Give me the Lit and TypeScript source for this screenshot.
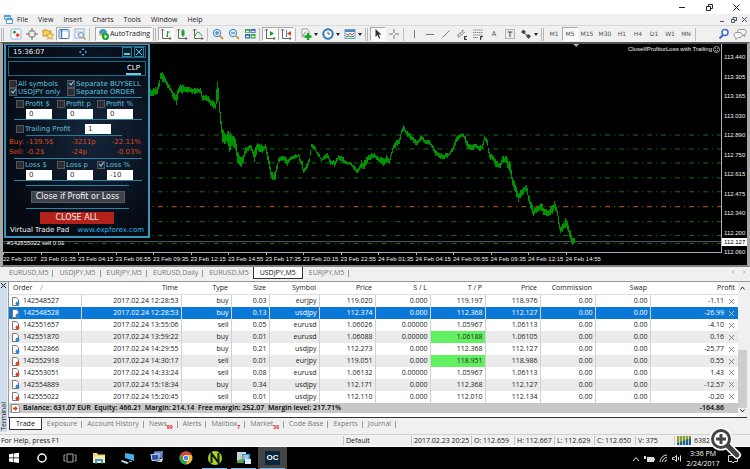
import { LitElement, html, css, svg, nothing } from "lit";
import { customElement } from "lit/decorators.js";
import { classMap } from "lit/directives/class-map.js";

type Trade = { id: string; time: string; type: string; size: string; symbol: string; open: string; sl: string; tp: string; price: string; profit: string; hit?: boolean };

const trade = (id: string, time: string, type: string, size: string, symbol: string, open: string, sl: string, tp: string, price: string, profit: string, hit = false): Trade =>
  ({ id, time: `2017.02.24 ${time}`, type, size, symbol, open, sl, tp, price, profit, hit });

const TRADES: Trade[] = [
  trade("142548527", "12:28:53", "buy", "0.03", "eurjpy", "119.020", "0.000", "119.197", "118.976", "-1.11"),
  trade("142548528", "12:28:53", "buy", "0.13", "usdjpy", "112.374", "0.000", "112.368", "112.127", "-26.99"),
  trade("142551657", "13:55:06", "sell", "0.05", "eurusd", "1.06026", "0.00000", "1.05967", "1.06113", "-4.10"),
  trade("142551870", "13:59:22", "buy", "0.01", "eurusd", "1.06088", "0.00000", "1.06188", "1.06105", "0.16", true),
  trade("142552866", "14:29:55", "buy", "0.21", "usdjpy", "112.273", "0.000", "112.368", "112.127", "-25.77"),
  trade("142552918", "14:30:17", "sell", "0.01", "eurjpy", "119.051", "0.000", "118.951", "118.986", "0.55", true),
  trade("142553051", "14:33:24", "sell", "0.08", "eurusd", "1.06132", "0.00000", "1.05967", "1.06113", "1.43"),
  trade("142554889", "15:18:34", "buy", "0.34", "usdjpy", "112.171", "0.000", "112.368", "112.127", "-12.57"),
  trade("142555022", "15:20:45", "sell", "0.01", "usdjpy", "112.110", "0.000", "112.010", "112.134", "-0.20"),
];
const COLUMNS = [72, 100, 50, 38, 50, 56, 55, 55, 55, 55, 55, 76, 12];
const HEADS = ["Time", "Type", "Size", "Symbol", "Price", "S / L", "T / P", "Price", "Commission", "Swap"];
const TIMES = ["22 Feb 2017", "23 Feb 01:35", "23 Feb 04:15", "23 Feb 06:55", "23 Feb 09:35", "23 Feb 12:15", "23 Feb 14:55", "23 Feb 17:35", "23 Feb 20:15", "23 Feb 22:55", "24 Feb 01:35", "24 Feb 04:15", "24 Feb 06:55", "24 Feb 09:35", "24 Feb 12:15", "24 Feb 14:55"];
const PRICES = ["113.440", "113.305", "113.165", "113.030", "112.890", "112.750", "112.615", "112.475", "112.340", "112.200", "112.060"];
const LEVELS = [135, 149, 163, 178, 192, 222, 236, 244];

/* Price curve: x, middle of the bar, half of its range */
const CURVE: number[][] = [
  [150, 93, 4], [154, 92, 4], [157, 90, 4], [159, 84, 5], [160, 75, 4], [162, 77, 5], [164, 78, 4], [166, 84, 3], [170, 89, 3], [173, 95, 4],
  [176, 100, 6], [178, 90, 5], [185, 89, 4], [190, 91, 3], [200, 91, 3], [202, 99, 4], [205, 97, 3], [212, 104, 4], [215, 106, 4], [216, 95, 14],
  [218, 94, 11], [219, 108, 8], [221, 127, 8], [222, 136, 7], [225, 140, 7], [227, 138, 7], [229, 142, 11], [232, 141, 7], [235, 144, 7], [237, 158, 7],
  [240, 162, 5], [242, 162, 6], [245, 151, 4], [250, 147, 3], [254, 157, 6], [257, 147, 5], [262, 149, 4], [265, 147, 3], [268, 161, 5], [271, 176, 6],
  [273, 178, 4], [275, 175, 5], [278, 161, 3], [283, 158, 3], [287, 163, 4], [290, 159, 3], [298, 156, 2], [302, 166, 4], [303, 172, 3], [307, 166, 3],
  [309, 160, 4], [311, 146, 3], [314, 148, 2], [317, 154, 2], [321, 160, 2], [327, 156, 3], [330, 163, 2], [334, 164, 3], [338, 158, 3], [341, 158, 3],
  [345, 163, 2], [350, 164, 2], [354, 169, 3], [357, 172, 3], [361, 165, 4], [365, 166, 5], [369, 158, 4], [375, 156, 2], [379, 160, 3], [384, 163, 4],
  [387, 160, 4], [390, 162, 3], [393, 150, 3], [397, 143, 4], [400, 142, 4], [402, 133, 3], [404, 128, 3], [407, 134, 3], [412, 138, 3], [417, 144, 3],
  [419, 142, 2], [422, 137, 3], [425, 142, 2], [430, 142, 3], [434, 149, 3], [436, 153, 3], [440, 156, 3], [444, 157, 3], [447, 156, 3], [450, 155, 2],
  [453, 150, 3], [457, 140, 3], [460, 137, 2], [463, 135, 2], [467, 142, 4], [469, 147, 4], [473, 148, 4], [476, 146, 2], [480, 149, 3], [483, 147, 4],
  [485, 138, 3], [488, 144, 4], [490, 156, 4], [493, 158, 3], [497, 165, 4], [501, 166, 3], [503, 160, 4], [507, 161, 4], [511, 170, 6], [513, 180, 6],
  [517, 193, 5], [519, 199, 4], [522, 193, 4], [525, 190, 3], [527, 188, 4], [529, 198, 5], [532, 208, 5], [534, 213, 4], [537, 211, 4], [541, 208, 5],
  [545, 212, 4], [549, 215, 4], [553, 210, 5], [555, 206, 5], [557, 210, 3], [559, 220, 6], [561, 231, 4], [564, 228, 4], [566, 224, 5], [568, 225, 5],
  [571, 237, 5], [573, 243, 5], [576, 241, 3],
];
function bars(): string {
  let d = "";
  for (let x = 150; x < 576; x++) {
    let i = 0;
    while (CURVE[i + 1][0] <= x) i++;
    const [a, b] = [CURVE[i], CURVE[i + 1]];
    const t = (x - a[0]) / (b[0] - a[0]);
    const mid = a[1] + (b[1] - a[1]) * t;
    const half = a[2] + (b[2] - a[2]) * t;
    const n = Math.abs(Math.sin(x * 12.9898) * 43758.5453) % 1;
    const m = Math.abs(Math.sin(x * 78.233) * 12543.123) % 1;
    d += `M${x + 0.5} ${(mid - half * (0.4 + 0.7 * n)).toFixed(1)}V${(mid + half * (0.4 + 0.7 * m)).toFixed(1)}`;
  }
  return d;
}

const icon = (body: unknown, w = 12) => html`<svg class="ico" width=${w} height="12" viewBox="0 0 ${w} 12" fill="none" aria-hidden="true">${body}</svg>`;
const axes = svg`<path d="M2.5 1v9.5H11M1 2.5 2.500 1 4 2.500M9.500 9 11 10.500 9.500 12" stroke="#666"/>`;
const I = {
  newChart: icon(svg`<rect x="1" y="1" width="10" height="10" rx="1" fill="#fff" stroke="#8db9dd"/><path d="m2.500 4 2-1.500 2 1.500-2 2z" fill="#1fa53a"/><path d="m5.500 7 2-2 2.500 2-2.500 2.500z" fill="#e8442e"/>`),
  target: icon(svg`<circle cx="6" cy="6" r="3.5" stroke="#777"/><path d="M6 0v4M6 8v4M0 6h4M8 6h4" stroke="#777"/>`),
  favorites: icon(svg`<path d="M1 2h4l1 1h3v5H1z" fill="#f5cf58" stroke="#c89a22"/><path d="m8 4 1.200 2.500 2.600.3-2 1.800.6 2.700L8 10l-2.300 1.300.5-2.700-2-1.800 2.600-.3z" fill="#ffe07a" stroke="#bf9020" stroke-width=".7"/>`),
  panel: icon(svg`<rect x="1" y="1.500" width="10" height="9" rx="1" fill="#fff" stroke="#3d78bd"/><path d="M2 3h8" stroke="#9cc3ea"/><path d="M3.500 2v8" stroke="#3d78bd" stroke-width="1.500"/>`),
  tester: icon(svg`<rect x="1" y="1" width="9" height="9" fill="#f4f7fa" stroke="#9db2c6"/><path d="M2 4h7M4 2v7" stroke="#b9cadb"/><circle cx="7" cy="7" r="2.500" fill="#d9ecfa" stroke="#7398ba"/><path d="m9 9 2.500 2.500" stroke="#c69a35" stroke-width="1.500"/>`),
  auto: icon(svg`<path d="M1 6.500 6 9l5-3-5-2z" fill="#e6b93f"/><path d="M2 5c0-3 2-4 4-4s4 1 4 4L6 7z" fill="#4397c8"/><circle cx="8.500" cy="8.500" r="3.500" fill="#18a32c"/><path d="m7.500 6.500 3 2-3 2z" fill="#fff"/>`),
  bar: icon(svg`${axes}<path d="M7.500 3v6M6 8h1.500M7.500 4H10" stroke="#16a02c"/>`),
  candle: icon(svg`${axes}<path d="M7 1v8" stroke="#16a02c"/><rect x="5.500" y="2.500" width="3" height="5" fill="#16a02c"/>`),
  line: icon(svg`${axes}<path d="M3 8c2-5 4-5 7 0" stroke="#16a02c"/>`),
  zoomIn: icon(svg`<circle cx="5" cy="5" r="3.700" fill="#d7ecfb" stroke="#3b86c6"/><path d="M3 5h4M5 3v4" stroke="#2473b8"/><path d="m8 8 3 3" stroke="#d3a034" stroke-width="2"/>`),
  zoomOut: icon(svg`<circle cx="5" cy="5" r="3.700" fill="#d7ecfb" stroke="#3b86c6"/><path d="M3 5h4" stroke="#2473b8"/><path d="m8 8 3 3" stroke="#d3a034" stroke-width="2"/>`),
  tile: icon(svg`<path d="M1 1h5v4H1zM6.500 6h5v4.500h-5z" fill="#2faa3c"/><path d="M6.500 1h5v4h-5zM1 6h5v4.500H1z" fill="#2c66bd"/><path d="M2 2.800h3v1.500H2zM7.500 2.800h3v1.500h-3zM2 7.800h3v1.500H2zM7.500 7.800h3v1.500h-3z" fill="#fff"/>`),
  scroll: icon(svg`${axes}<path d="m6 3 4 2.500L6 8z" fill="#16a02c"/>`),
  shift: icon(svg`${axes}<path d="M6.500 2v7" stroke="#4b7fae"/><path d="m11 3-4 2.500L11 8z" fill="#de4326"/>`),
  indicator: icon(svg`<path d="M2 1h5l2 2v6H2z" fill="#fff" stroke="#999"/><path d="M3.500 8c1-4 1.500-4 3-4" stroke="#777"/><path d="M8 5v7M4.500 8.500h7" stroke="#12a626" stroke-width="2.500"/>`),
  clock: icon(svg`<circle cx="6" cy="6" r="4.700" fill="#fff" stroke="#2a76c2" stroke-width="2"/><path d="M6 3.500V6h2" stroke="#555"/>`),
  template: icon(svg`<rect x="1" y="1.500" width="10" height="9" fill="#eaf4fd" stroke="#6f9dc9"/><path d="M1 3h10" stroke="#4d8aca" stroke-width="2"/><path d="m2 6 2 1 2-1.500L8 7l2-2" stroke="#d4472f"/><path d="m2 9 3-1 2 1 3-1" stroke="#2ba03b"/>`),
  cursor: icon(svg`<path d="M3.500 1v8l2-2 1.500 3.500 1.200-.6L6.800 6.500h2.700z" fill="#333"/>`),
  cross: icon(svg`<path d="M6 1v4M6 7v4M1 6h4M7 6h4" stroke="#777"/>`),
  vline: icon(svg`<path d="M6.500 2v8" stroke="#777"/>`),
  hline: icon(svg`<path d="M2 6.500h8" stroke="#777"/>`),
  trend: icon(svg`<path d="m2.500 9.500 7-7" stroke="#777"/>`),
  channel: icon(svg`<path d="m1 8 7-6M2 10l7-6M2 6l1 3M4 4l1 3M6 2l1 3" stroke="#888" stroke-width=".8"/><path d="M8.500 8v4M8 8.500h3M8 10h2M8 11.500h3" stroke="#444"/>`),
  fibo: icon(svg`<path d="M1 2h10M1 4.500h10M1 7h10M1 9.500h5" stroke="#888" stroke-dasharray="1.500 .5"/><path d="M8 8.500h3M8.500 8v4M8 10h2" stroke="#444"/>`),
  arrows: icon(svg`<path d="m1 4 2.500-2.500L6 4 3.500 6zM6 8l2-2 3 2-2.500 3z" fill="#444"/><path d="m4 5 4 3" stroke="#555"/>`),
  search: icon(svg`<circle cx="7" cy="4.500" r="3" fill="#fff" stroke="#3b6ed0" stroke-width="1.500"/><path d="M5 7 1.500 10.500" stroke="#3b6ed0" stroke-width="2"/>`),
  chat: html`<svg class="ico" width="14" height="12" viewBox="0 0 14 12" fill="#f6f6f6" stroke="#999" aria-hidden="true"><path d="M6 1.500h5c3 0 3 5 0 5l1 2-3-2H6c-2 0-2-5 0-5z"/><path d="M3 4.500h4c3 0 3 5 0 5H5l-2 2v-2c-2.500 0-2.500-5 0-5z"/></svg>`,
};

const task = (body: unknown) => html`<svg width="16" height="16" viewBox="0 0 16 16" fill="none" aria-hidden="true">${body}</svg>`;
const TASKS: { name: string; art: unknown; state?: string }[] = [
  { name: "Start", art: task(svg`<path d="M3 4.200 7.300 3.600v4H3zM7.900 3.500 13 2.800v4.800H7.900zM3 8.200h4.300v4L3 11.600zM7.900 8.200H13V13l-5.100-.7z" fill="#fff"/>`) },
  { name: "Cortana", art: task(svg`<circle cx="8" cy="8" r="4" stroke="#fff" stroke-width="1.500"/>`) },
  { name: "Task View", art: task(svg`<path d="M5 4h6v8H5zM3.500 5H2v6h1.500M12.500 5H14v6h-1.500" stroke="#aaa"/>`) },
  { name: "File Explorer", art: task(svg`<path d="M2 3h4l1 1.500h7V13H2z" fill="#f7d774"/><path d="M2 6h12v7H2z" fill="#fce9a4"/><path d="M4 9h8v4.500h-2V11H6v2.500H4z" fill="#3c9be0"/>`) },
  { name: "Computer", art: task(svg`<path d="m5 3 9 1.500V11L5 8z" fill="#45aee8"/><path d="m2 10 7 2.500L7 14l-6-2.500z" fill="#c7d8e3"/><path d="m9 11 3 .8" stroke="#8ba"/>`) },
  { name: "Remote Desktop", art: task(svg`<path d="m5 1.500 9-.5-.5 7L5 7z" fill="#6b87cb"/><path d="m2 4.500 8-.5v6l-7 .5z" fill="#2b53b4" stroke="#dbe4f0"/><path d="M6 12h7l1-4-3 1-1 2z" fill="#cbd2dc"/>`) },
  { name: "Chrome", art: task(svg`<circle cx="8" cy="8" r="6.500" fill="#e8b92c"/><path d="M2.300 5A6.500 6.500 0 0 1 13.700 5H8L5 9z" fill="#db4538"/><path d="M2.300 5A6.500 6.500 0 0 0 7.500 14.500L10 10 5 9z" fill="#26a154"/><circle cx="8" cy="8" r="3" fill="#fff"/><circle cx="8" cy="8" r="2.300" fill="#4786ea"/>`) },
  { name: "Navigator", state: "open", art: task(svg`<circle cx="8" cy="8" r="7" fill="#a6d71e"/><path d="M4.500 13V3.500l7 9V3" stroke="#101010" stroke-width="2"/>`) },
  { name: "Trade Terminal", state: "open", art: task(svg`<path d="M1 2h9v9H1z" fill="#b6d8ef"/><path d="M6 4h8v7H6z" fill="#3f8ed0"/><path d="M7.500 6h5M7.500 8h5" stroke="#fff"/><circle cx="4.500" cy="7" r="2" fill="#efc28b"/><path d="M1 13c0-5 7-5 7 0z" fill="#55a83e"/><path d="M9 9h6v5H9z" fill="#d7ebf7"/>`) },
  { name: "Recorder", state: "open active", art: html`<span class="oc">OC</span>` },
];

const check = (label: string, on = false) => html`<label class="check"><input type="checkbox" .checked=${on} />${label}</label>`;

@customElement("trade-pad")
export class TradePad extends LitElement {
  static styles = css`
    :host { display: block; box-sizing: border-box; border: 2px solid #3597bd; border-top-width: 1px; background: radial-gradient(ellipse at 60% 45%, #16263c, #050a13 75%); color: #5fc0da; font: 7px/8px "DejaVu Sans", sans-serif; padding: 1px 2px 2px; }
    button, input { font: inherit; margin: 0; padding: 0; border: 0; border-radius: 0; }
    header { display: flex; align-items: center; justify-content: space-between; height: 12px; border: 1px solid #1f6d8d; color: #f2f2f2; padding: 0 1px 0 4px; box-sizing: border-box; }
    header .win { display: flex; gap: 2px; }
    header button { width: 10px; height: 10px; background: #0b1d2b; border: 1px solid #27809f; color: #6cc4dc; display: grid; place-items: center; }
    .tabs { display: flex; justify-content: flex-end; height: 15px; margin-top: 3px; border: 1px solid #1f6d8d; box-sizing: border-box; padding: 0 4px; background: #060b13; }
    .tabs button { background: none; color: #fff; border-bottom: 2px solid #79c6e6; padding: 0 1px; }
    .check { display: flex; align-items: center; gap: 1px; white-space: nowrap; }
    .check input { appearance: none; width: 8px; height: 8px; background: #2d2d31; border: 1px solid #55565b; box-sizing: border-box; flex: none; position: relative; }
    .check input:checked { background: #23313d; }
    .check input:checked::after { content: ""; position: absolute; left: 2px; top: -1px; width: 2px; height: 4px; border: solid #87d7f7; border-width: 0 1px 1px 0; transform: rotate(40deg); }
    .two { display: grid; grid-template-columns: 58px 1fr; padding: 4px 0 0 1px; }
    .group { margin: 1px 4px 0 6px; border: 1px solid #2b86a6; border-width: 1px 0; padding: 2px 2px 0; display: grid; grid-template-columns: 41px 40px 1fr; row-gap: 1px; }
    .field { width: 26px; height: 10px; box-sizing: border-box; background: #fff; color: #333; padding-left: 3px; margin-left: 10px; }
    .trail { display: flex; align-items: center; justify-content: space-between; padding: 4px 35px 0 8px; }
    .trail .field { margin: 0; }
    .rule { border-top: 1px solid #2b7896; margin: 1px 24px 1px 18px; }
    .sums { display: grid; grid-template-columns: 62px 36px 1fr; padding-left: 1px; color: #dc4a1c; line-height: 10px; }
    .sums span:nth-child(3n) { text-align: right; padding-right: 5px; }
    .close { margin: 4px 17px 0 18px; border: 1px solid #2b86a6; border-width: 1px 0; height: 24px; box-sizing: border-box; display: grid; place-items: center; }
    .close button { width: 94px; height: 12px; background: #3e434b; border: 1px solid #555b64; color: #f4f4f4; font-size: 8px; line-height: 8px; white-space: nowrap; }
    .all { display: block; width: 74px; height: 12px; margin: 3px auto 0 32px; background: #b3221a; color: #f5efef; font-size: 8px; line-height: 8px; }
    footer { display: flex; justify-content: space-between; padding: 2px 2px 0; color: #f2f2f2; white-space: nowrap; }
    a { color: #39b5ea; text-decoration: none; }
  `;
  private group(kind: string, marks: boolean[], values: string[]) {
    const units = ["$", "p", "%"];
    return html`<div class="group">
      ${units.map((u, i) => check(`${kind} ${u}`, marks[i]))}
      ${units.map((u, i) => html`<input class="field" type="text" aria-label="${kind} ${u} value" .value=${values[i]} />`)}
    </div>`;
  }
  render() {
    return html`
      <header><span>15:36:07</span>
        <svg width="8" height="8" viewBox="0 0 8 8" fill="none" stroke="#4db8dc" aria-hidden="true"><path d="m3 2 1-1.500L5 2M3 6l1 1.500L5 6M2 3 .5 4 2 5M6 3l1.500 1L6 5"/></svg>
        <span class="win"><button aria-label="Minimize"><svg width="6" height="6"><path d="M0 5h6" stroke="currentColor" stroke-width="2"/></svg></button>
        <button aria-label="Close"><svg width="6" height="6"><path d="m0 0 6 6M6 0 0 6" stroke="currentColor"/></svg></button></span>
      </header>
      <div class="tabs"><button>CLP</button></div>
      <div class="two">${check("All symbols")}${check("Separate BUYSELL", true)}${check("USDJPY only", true)}${check("Separate ORDER")}</div>
      ${this.group("Profit", [false, false, false], ["0", "0", "0"])}
      <div class="trail">${check("Trailing Profit")}<input class="field" type="text" aria-label="Trailing Profit value" .value=${"1"} /></div>
      <div class="rule"></div>
      <div class="sums"><span>Buy: -139.5$</span><span>-3211p</span><span>-22.11%</span><span>Sell: -0.2$</span><span>-24p</span><span>-0.03%</span></div>
      ${this.group("Loss", [false, false, true], ["0", "0", "-10"])}
      <div class="close"><button>Close if Profit or Loss</button></div>
      <button class="all">CLOSE ALL</button>
      <footer><span>Virtual Trade Pad</span><a href="#expforex">www.expforex.com</a></footer>`;
  }
}

@customElement("price-chart")
export class PriceChart extends LitElement {
  static styles = css`
    :host { display: grid; grid-template: minmax(0, 1fr) 12px / minmax(0, 1fr) 25px; position: relative; background: #000; color: #f0f0f0; font: 6px/8px "Liberation Sans", sans-serif; border: solid #a8a8a8; border-width: 2px 3px 2px 3px; border-top-color: #555; border-bottom-color: #808080; box-sizing: border-box; overflow: hidden; }
    .plot { position: relative; border: solid #b0b0b0; border-width: 0 1px 1px 0; min-height: 0; }
    .plot svg { position: absolute; inset: 0; width: 100%; height: 100%; display: block; }
    .prices { display: flex; flex-direction: column; justify-content: space-between; padding: 9px 0 0 2px; margin-bottom: -3px; position: relative; }
    .now { position: absolute; left: 0; right: 0; top: 194px; background: #fff; color: #000; padding-left: 2px; }
    .times { grid-column: 1 / 3; display: grid; grid-template-columns: repeat(20, 5vw); white-space: nowrap; }
    .times span { padding-top: 2px; background: linear-gradient(#b0b0b0, #b0b0b0) 0 0 / 1px 2px no-repeat; }
    .name { position: absolute; right: 27px; top: 0; display: flex; align-items: center; gap: 1px; line-height: 10px; }
    .order { position: absolute; left: 4px; bottom: 18px; }
    trade-pad { position: absolute; left: 1px; top: 0; width: 146px; height: 194px; }
  `;
  render() {
    return html`
      <div class="plot"><svg viewBox="3 44 719 209" preserveAspectRatio="none" fill="none" aria-label="USDJPY price">
        <path d=${LEVELS.map((y) => `M4 ${y + 0.5}H722`).join("")} stroke="#167016" stroke-dasharray="5 4 1 4"/>
        <path d="M4 207.500H722" stroke="#c05c1c" stroke-dasharray="5 4 1 4"/>
        <path d="M3 242.500H722" stroke="#565a72"/>
        <path d=${bars()} stroke="#009400" shape-rendering="crispEdges"/>
        <path d="M574 44h6l-3 3z" fill="#9fb2c6"/>
      </svg></div>
      <div class="prices">${PRICES.map((p) => html`<span>${p}</span>`)}<span class="now">112.127</span></div>
      <div class="times">${TIMES.map((t) => html`<span>${t}</span>`)}</div>
      <div class="name">CloseIfProfitorLoss with Trailing <svg width="7" height="7" viewBox="0 0 7 7" fill="none" stroke="#ddd" stroke-width=".7" aria-hidden="true"><circle cx="3.500" cy="3.500" r="3"/><path d="M2.300 2v1M4.700 2v1M2 4.300q1.500 1.500 3 0"/></svg></div>
      <div class="order">#142555022 sell 0.01</div>
      <trade-pad></trade-pad>`;
  }
}

@customElement("trade-table")
export class TradeTable extends LitElement {
  static styles = css`
    :host { display: block; background: #fff; color: #222; font: 7px/10px "Open Sans", sans-serif; }
    table { width: 100%; height: 131px; table-layout: fixed; border-collapse: collapse; }
    th, td { padding: 0 2px 0 0; text-align: right; white-space: nowrap; overflow: hidden; }
    th { font-weight: 400; line-height: 12px; padding-right: 3px; border-bottom: 1px solid #ddd; height: 12px; }
    td { border-right: 1px solid #d2d2d2; }
    td:first-child, th:first-child { text-align: left; }
    th:first-child { padding-left: 4px; }
    th i { color: #888; padding-left: 6px; }
    td:nth-last-child(-n + 2) { border-right: 0; }
    td:last-child { padding: 0; }
    .alt td { background: #ebebeb; }
    .sel td { background: #0a78d7; color: #fff; }
    .alt td.hit { background: #62f062; }
    .id { display: flex; align-items: center; gap: 3px; padding-left: 2px; }
    .x { border: 0; padding: 0; margin: 0; background: none; display: grid; place-items: center; width: 10px; height: 9px; color: #888; }
    .sel .x { color: #c9c0a0; }
    tfoot td { background: #c8c8c8; border: 0; font-weight: 600; color: #000; }
    tfoot .id { white-space: pre; }
  `;
  render() {
    return html`<table>
      <colgroup>${COLUMNS.map((w) => html`<col width=${w} />`)}</colgroup>
      <thead><tr><th>Order <i>/</i></th>${HEADS.map((h) => html`<th>${h}</th>`)}<th colspan="2">Profit</th></tr></thead>
      <tbody>${TRADES.map((t, i) => html`<tr class=${classMap({ sel: i === 1, alt: i % 2 === 1 && i !== 1 })}>
        <td><span class="id"><svg width="9" height="9" viewBox="0 0 9 9" fill="none" aria-hidden="true"><path d="M1.500.5h4l2 2v6h-6z" fill="#fff" stroke="#777"/><circle cx="6.500" cy="6.500" r="2" fill=${t.type === "buy" ? "#2b8ad0" : "#dc4826"}/></svg>${t.id}</span></td>
        <td>${t.time}</td><td>${t.type}</td><td>${t.size}</td><td>${t.symbol}</td><td>${t.open}</td><td>${t.sl}</td>
        <td class=${t.hit ? "hit" : ""}>${t.tp}</td><td>${t.price}</td><td>0.00</td><td>0.00</td><td>${t.profit}</td>
        <td><button class="x" aria-label="Close order ${t.id}"><svg width="5" height="5"><path d="m0 0 5 5M5 0 0 5" stroke="currentColor"/></svg></button></td>
      </tr>`)}</tbody>
      <tfoot><tr><td colspan="11"><span class="id"><svg width="9" height="9" viewBox="0 0 9 9" aria-hidden="true"><path d="M.5.5h6l2 2v6h-8z" fill="#fff" stroke="#888"/><path d="M2 3.500h2V2l3 2.500L4 7V5.500H2z" fill="#d8431e"/></svg>Balance: 631.07 EUR  Equity: 466.21  Margin: 214.14  Free margin: 252.07  Margin level: 217.71%</span></td><td>-164.86</td><td></td></tr></tfoot>
    </table>`;
  }
}

@customElement("app-root")
export class AppRoot extends LitElement {
  static styles = css`
    :host { display: flex; flex-direction: column; min-height: 100vh; position: relative; overflow: hidden; background: #f0f0f0; color: #222; font: 7px/10px "Open Sans", "Noto Sans", sans-serif; }
    button { font: inherit; color: inherit; margin: 0; padding: 0; border: 0; background: none; border-radius: 0; }
    svg { display: block; flex: none; }
    .title { display: flex; justify-content: flex-end; align-items: center; height: 14px; background: #fff; }
    .title button { width: 27px; height: 12px; display: grid; place-items: center; }
    .menu { display: flex; align-items: center; height: 11px; padding-left: 4px; gap: 10px; }
    .menu svg { margin-right: -6px; }
    .menu .mdi { margin-left: auto; display: flex; color: #456; }
    .mdi button { width: 11px; height: 10px; display: grid; place-items: center; }
    .mdi svg { margin: 0; }
    .bar { display: flex; align-items: center; height: 17px; box-sizing: border-box; border-top: 1px solid #d9d9d9; padding-right: 2px; }
    .bar button { width: 16px; height: 14px; display: flex; align-items: center; justify-content: center; box-sizing: border-box; flex: none; color: #555; }
    .bar .on { border: 1px solid #b4b4b4; border-color: #a8a8a8 #fff #fff #a8a8a8; background: #f9f9f9; }
    .bar .dd { width: 22px; }
    .dd::after { content: ""; border: 2px solid transparent; border-top: 3px solid #222; border-bottom: 0; margin-left: 2px; }
    .bar .auto { width: 57px; gap: 1px; color: #222; white-space: nowrap; }
    .sep { width: 4px; height: 13px; flex: none; background: linear-gradient(#bdbdbd, #bdbdbd) 1px 0 / 1px 100% no-repeat; }
    .grip { width: 6px; height: 13px; flex: none; background: linear-gradient(90deg, transparent 1px, #b5b5b5 1px 2px, transparent 2px 3px, #b5b5b5 3px 4px, transparent 4px); }
    .frames { display: flex; font: 6px/10px "DejaVu Sans", sans-serif; }
    .frames .wide { width: 18px; }
    .bar .push { margin-left: auto; }
    .bar .first { margin-left: 2px; }
    .gap { width: 3px; flex: none; }
    price-chart { flex: 1 0 225px; }
    .tabs { display: flex; height: 14px; align-items: flex-start; color: #777; white-space: nowrap; }
    .tabs > button { padding: 0 5px; height: 12px; display: flex; align-items: center; background: linear-gradient(#999, #999) 100% 3px / 1px 7px no-repeat; }
    .tabs.top > button { padding-left: 6px; }
    .tabs > .cur { color: #111; background: #fff; border: 1px solid #333; border-top: 0; padding: 0 6px; margin-left: -1px; }
    .tabs small { color: #e02020; font: bold 5px/6px "Open Sans", sans-serif; align-self: flex-end; }
    .top { padding-left: 3px; }
    .top .arrows { margin-left: auto; display: flex; gap: 5px; padding-right: 3px; }
    .arrows button { width: 6px; height: 10px; }
    .term { display: grid; grid-template-columns: 8px minmax(0, 1fr) 9px 3px; grid-template-rows: auto 14px; border-top: 1px solid #999; padding-bottom: 2px; }
    .side { grid-row: 1 / 3; background: #cfdded; display: flex; flex-direction: column; align-items: center; justify-content: space-between; margin-right: 1px; padding-bottom: 1px; }
    .side b { writing-mode: vertical-rl; transform: rotate(180deg); font-weight: 400; line-height: 7px; }
    .body { background: #fff; border-left: 1px solid #999; padding-bottom: 4px; border-bottom: 1px solid #333; }
    .vbar { background: #f0f0f0; border-bottom: 1px solid #333; display: flex; flex-direction: column; align-items: center; justify-content: space-between; padding: 3px 0; }
    .vbar::before { content: ""; order: 2; width: 100%; height: 58px; margin-top: auto; background: #cdcdcd; }
    .vbar button:last-child { order: 3; }
    .vbar button { height: 6px; width: 8px; display: grid; place-items: center; }
    .bottom { grid-column: 2 / 4; padding-left: 2px; }
    .status { display: grid; grid-template-columns: minmax(0, 1fr) 68px 60px 43px 40px 40px 41px 39px 76px; height: 13px; align-items: center; border-top: 1px solid #d0d0d0; border-bottom: 1px solid #fff; box-sizing: border-box; white-space: nowrap; line-height: 9px; }
    .status span { border-left: 1px solid #c4c4c4; padding-left: 2px; display: flex; align-items: center; gap: 3px; }
    .status span:first-child { border: 0; padding-left: 1px; }
    .tasks { display: flex; height: 23px; background: #000; color: #fff; align-items: stretch; }
    .tasks button { width: 29px; box-sizing: border-box; display: grid; place-items: center; border-bottom: 2px solid transparent; flex: none; }
    .tasks button:nth-child(-n + 3) { width: 28px; }
    .tasks .open { border-image: linear-gradient(90deg, transparent 10%, #76b9ed 10% 90%, transparent 90%) 1; border-width: 0 0 2px; border-style: solid; }
    .tasks .active { background: #454545; }
    .oc { background: #06263d; font: bold 8px/13px "Liberation Sans", sans-serif; width: 15px; height: 14px; text-align: center; }
    .tray { margin-left: auto; display: flex; align-items: center; gap: 4px; padding-right: 12px; }
    .clock { text-align: center; width: 34px; margin-right: 4px; }
    .loupe { position: absolute; right: 8px; bottom: 9px; }
  `;
  private tool(name: keyof typeof I, cls = "") {
    return html`<button class=${cls} aria-label=${name}>${I[name]}</button>`;
  }
  render() {
    const sep = html`<i class="sep"></i>`;
    const grip = html`<i class="grip"></i>`;
    const tab = (t: string, cur = false, n = "") => html`<button class=${cur ? "cur" : ""}>${t}${n ? html`<small>${n}</small>` : nothing}</button>`;
    return html`
      <div class="title">
        <button aria-label="Minimize"><svg width="7" height="7"><path d="M0 3.500h6" stroke="#222"/></svg></button>
        <button aria-label="Restore"><svg width="7" height="7" fill="none" stroke="#222"><path d="M.5 2.500h4v4h-4zM2.500 2V.5h4v4H5"/></svg></button>
        <button aria-label="Close"><svg width="7" height="7"><path d="m.5.5 6 6M6.500.5l-6 6" stroke="#222"/></svg></button>
      </div>
      <nav class="menu">
        <svg width="9" height="9" viewBox="0 0 9 9" fill="#fff" stroke="#5c9bd1"><path d="M.5.5h6v4h-6z"/><path d="M2.500 3.500h6v5h-6z"/><path d="M.5 1.500h6M2.500 4.500h6" stroke-width="1.500"/></svg>
        ${["File", "View", "Insert", "Charts", "Tools", "Window", "Help"].map((m) => html`<button>${m}</button>`)}
        <span class="mdi">
          <button aria-label="Minimize chart"><svg width="5" height="5"><path d="M0 4.500h4" stroke="currentColor"/></svg></button>
          <button aria-label="Restore chart"><svg width="6" height="6" fill="none" stroke="currentColor"><path d="M.5 2.500h3v3h-3zM2 2V.5h3.500v3H4"/></svg></button>
          <button aria-label="Close chart"><svg width="5" height="5"><path d="m0 0 5 5M5 0 0 5" stroke="currentColor"/></svg></button>
        </span>
      </nav>
      <div class="bar">
        ${grip}${this.tool("newChart", "first")}${this.tool("target")}${this.tool("favorites")}${this.tool("panel", "on")}${this.tool("tester")}
        ${sep}<i class="gap"></i><button class="auto on">${I.auto}AutoTrading</button>${grip}
        ${this.tool("bar", "on")}${this.tool("candle")}${this.tool("line")}${sep}
        ${this.tool("zoomIn")}${this.tool("zoomOut")}${this.tool("tile")}${sep}
        ${this.tool("scroll", "on")}${this.tool("shift", "on")}${sep}
        ${this.tool("indicator", "dd")}${this.tool("clock", "dd")}${this.tool("template", "dd")}${grip}
        ${this.tool("cursor", "on")}${this.tool("cross")}${sep}
        ${this.tool("vline")}${this.tool("hline")}${this.tool("trend")}${this.tool("channel")}${this.tool("fibo")}
        <button>A</button><button aria-label="Text label"><svg width="10" height="10" fill="none" stroke="#777"><path d="M.5.5h9v9h-9z" stroke-dasharray="1 1"/><path d="M2.500 3h5M5 3v5" stroke="#444"/></svg></button>${this.tool("arrows", "dd")}${grip}
        <div class="frames">${["M1", "M5", "M15", "M30", "H1", "H4", "D1", "W1", "MN"].map((f) => html`<button class=${classMap({ on: f === "M5", wide: f.length === 3 })}>${f}</button>`)}</div>
        ${sep}${this.tool("search", "push")}${this.tool("chat")}
      </div>
      <price-chart></price-chart>
      <div class="tabs top">
        ${tab("EURUSD,M5")}${tab("USDJPY,M5")}${tab("EURJPY,M5")}${tab("EURUSD,Daily")}${tab("EURUSD,M5")}${tab("USDJPY,M5", true)}${tab("EURJPY,M5")}
        <span class="arrows"><button aria-label="Previous">‹</button><button aria-label="Next">›</button></span>
      </div>
      <section class="term">
        <div class="side"><button aria-label="Close terminal"><svg width="5" height="7"><path d="m0 1 5 5M5 1 0 6" stroke="#222"/></svg></button><b>Terminal</b></div>
        <div class="body"><trade-table></trade-table></div>
        <div class="vbar"><button aria-label="Scroll up"><svg width="5" height="4" fill="none" stroke="#333"><path d="M.5 3.500 2.500 1l2 2.500"/></svg></button><button aria-label="Scroll down"><svg width="5" height="4" fill="none" stroke="#333"><path d="m.5.5 2 2.500 2-2.500"/></svg></button></div>
        <div class="tabs bottom">
          ${tab("Trade", true)}${tab("Exposure")}${tab("Account History")}${tab("News", false, "99")}${tab("Alerts")}${tab("Mailbox", false, "7")}${tab("Market", false, "30")}${tab("Code Base")}${tab("Experts")}${tab("Journal")}
        </div>
      </section>
      <div class="status">
        <span>For Help, press F1</span><span>Default</span><span>2017.02.23 20:25</span><span>O: 112.659</span><span>H: 112.667</span><span>L: 112.629</span><span>C: 112.650</span><span>V: 375</span>
        <span><svg width="14" height="9" viewBox="0 0 14 9"><path d="M0 0h14v4L0 7z" fill="#8ba028"/><path d="M0 9V7l14-5v7z" fill="#1f5f8c"/><path d="M2.500 0v9M5.500 0v9M8.500 0v9M11.500 0v9" stroke="#f0f0f0" stroke-width=".7"/></svg>6382</span>
      </div>
      <div class="tasks">
        ${TASKS.map((t) => html`<button class=${t.state ?? ""} aria-label=${t.name}>${t.art}</button>`)}
        <div class="tray">
          <svg width="8" height="6" fill="none" stroke="#eee"><path d="m1 5 3-3.500L7 5"/></svg>
          <svg width="11" height="8"><path d="M3 2h7v5H3zM0 1h2v3H0z" fill="#ddd"/><path d="M10 3.500h1v2h-1z" fill="#ddd"/></svg>
          <svg width="9" height="9" fill="none" stroke="#ddd"><path d="M1 8a7 7 0 0 1 7-7M3.500 8A4.500 4.500 0 0 1 8 3.500M6 8a2 2 0 0 1 2-2"/></svg>
          <svg width="10" height="9" fill="none" stroke="#ddd"><path d="M.5 3.500h2l2-2v6l-2-2h-2zM6.500 3v3M8.500 1.500v6"/></svg>
          <span class="clock">3:36 PM<br />2/24/2017</span>
          <svg width="10" height="10" fill="none" stroke="#ddd"><path d="M.5 1.500h9v6h-3L5 9 4 7.500H.5z"/></svg>
        </div>
      </div>
      <svg class="loupe" width="34" height="34" viewBox="0 0 34 34" fill="none" aria-hidden="true">
        <path d="m20 19 9 9" stroke="#fff" stroke-width="8" stroke-linecap="round"/><circle cx="13" cy="12" r="9" fill="#fff" stroke="#fff" stroke-width="5"/>
        <path d="m20 19 9 9" stroke="#444" stroke-width="5" stroke-linecap="round"/><circle cx="13" cy="12" r="8.500" fill="#fff" stroke="#444" stroke-width="3"/><path d="M8 12h10M13 7v10" stroke="#444" stroke-width="3"/>
      </svg>`;
  }
}
